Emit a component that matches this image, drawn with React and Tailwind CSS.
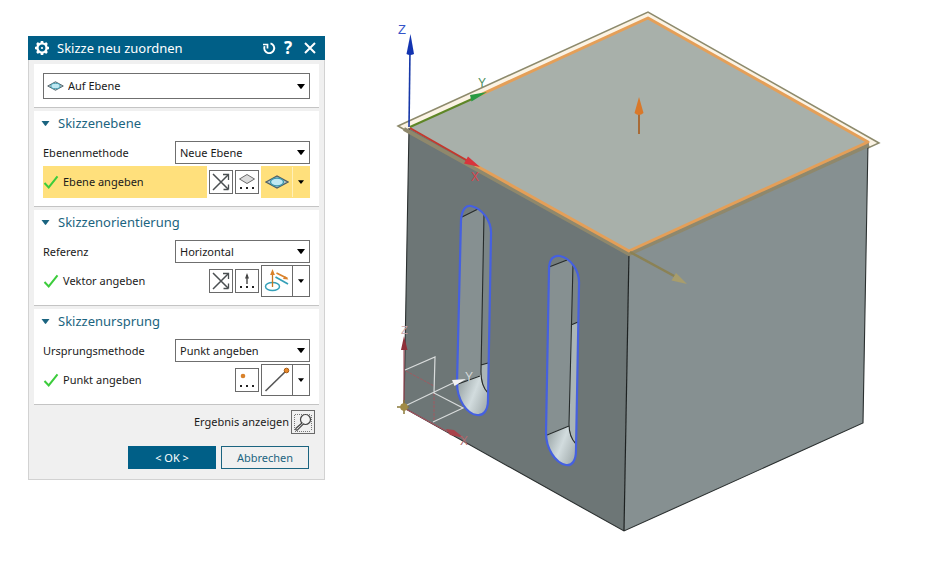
const CaretIcon = ({ className }) => (
  <svg viewBox="0 0 8 5" className={className} aria-hidden="true">
    <path d="M0 0h8L4.6 4.6a.8.8 0 0 1-1.2 0z" fill="currentColor" />
  </svg>
)

const GearIcon = () => (
  <svg viewBox="0 0 16 16" className="h-4 w-4" fill="none" stroke="currentColor" aria-hidden="true">
    <circle cx="8" cy="8" r="4.6" strokeWidth="2.4" />
    <circle cx="8" cy="8" r="1.1" fill="currentColor" stroke="none" />
    <path
      d="M8 1v2M8 13v2M1 8h2M13 8h2M3 3l1.500 1.500M11.500 11.500L13 13M3 13l1.500-1.500M11.500 4.500L13 3"
      strokeWidth="2.6"
    />
  </svg>
)

const ResetIcon = () => (
  <svg viewBox="0 0 14 14" className="h-[14px] w-[14px]" fill="none" stroke="currentColor" aria-hidden="true">
    <path d="M8.500 2.300A5 5 0 1 1 2.600 5.200" strokeWidth="1.9" />
    <path d="M1 3.500h4.500v4" strokeWidth="1.700" />
  </svg>
)

const CloseIcon = () => (
  <svg viewBox="0 0 12 12" className="h-3 w-3" fill="none" stroke="currentColor" aria-hidden="true">
    <path d="M1 1l10 10M11 1L1 11" strokeWidth="2" />
  </svg>
)

const CheckIcon = () => (
  <svg viewBox="0 0 16 14" className="h-[14px] w-4" fill="none" aria-hidden="true">
    <path d="M1.500 8l4.200 4.400L14.500 1.400" stroke="#3ccc3c" strokeWidth="2" />
  </svg>
)

const PlaneIcon = ({ className }) => (
  <svg viewBox="0 0 24 14" className={className} aria-hidden="true">
    <path d="M1 7L12 1l11 6-11 6z" fill="#b4c8cc" stroke="#4f5f66" strokeWidth="1.3" />
    <ellipse cx="12" cy="7" rx="6.5" ry="3.8" fill="#bfe8f2" stroke="#3a98ac" strokeWidth="1.3" />
  </svg>
)

const ReverseIcon = () => (
  <svg viewBox="0 0 22 22" className="h-[22px] w-[22px]" fill="none" stroke="#4a4f52" aria-hidden="true">
    <path d="M3 3l15 15M3 19L18.500 3.500" strokeWidth="1.500" />
    <path d="M13 3.500h5.500V9M18.500 13.500v5M18.500 18.500h-5" strokeWidth="1.300" />
  </svg>
)

const Dots = () => (
  <path d="M4 16h2v2H4zM10 16h2v2h-2zM16 16h2v2h-2z" fill="#222" />
)

const PlaneDialogIcon = () => (
  <svg viewBox="0 0 22 22" className="h-[22px] w-[22px]" aria-hidden="true">
    <path d="M3.500 8L11 3.500 18.500 8 11 12.500z" fill="#dcdcdc" stroke="#6a6a6a" />
    <Dots />
  </svg>
)

const VectorDialogIcon = () => (
  <svg viewBox="0 0 22 22" className="h-[22px] w-[22px]" aria-hidden="true">
    <path d="M11 14V5" stroke="#444" strokeWidth="1.400" />
    <path d="M11 3l2 5.500H9z" fill="#444" />
    <Dots />
  </svg>
)

const PointDialogIcon = () => (
  <svg viewBox="0 0 22 22" className="h-[22px] w-[22px]" aria-hidden="true">
    <circle cx="7" cy="7" r="2.300" fill="#d9822b" />
    <Dots />
  </svg>
)

const InferredVectorIcon = () => (
  <svg viewBox="0 0 30 30" className="h-[30px] w-[30px]" fill="none" aria-hidden="true">
    <ellipse cx="10.500" cy="20.500" rx="7" ry="4" stroke="#35a0b8" strokeWidth="1.500" />
    <path d="M10.500 21V6" stroke="#c87620" strokeWidth="1.300" />
    <path d="M10.500 3l2.400 6H8.100z" fill="#d9822b" />
    <path d="M14.500 7l11 5.500" stroke="#d9822b" strokeWidth="1.700" />
    <path d="M26.500 13.500l-5.500-.5 1.700-3z" fill="#d9822b" />
    <path d="M13.500 11l12.500 7" stroke="#35a0b8" strokeWidth="1.700" />
  </svg>
)

const EndPointIcon = () => (
  <svg viewBox="0 0 30 30" className="h-[30px] w-[30px]" fill="none" aria-hidden="true">
    <path d="M3.500 26L24 6" stroke="#555" strokeWidth="1.600" />
    <circle cx="24.500" cy="5.500" r="2.300" fill="#e8882a" stroke="#a85c14" />
  </svg>
)

const MagnifierIcon = () => (
  <svg viewBox="0 0 22 22" className="h-[22px] w-[22px]" fill="none" aria-hidden="true">
    <path d="M3 3.500h16M3 20.500h16M2.500 4v16M19.500 4v16" stroke="#777" strokeDasharray="1 1" />
    <circle cx="13.500" cy="8.500" r="5" fill="#f4f4f4" stroke="#444" strokeWidth="1.200" />
    <path d="M10 12l-6 5.300a1 1 0 0 0 1.500 1.500l6-6" fill="#f4f4f4" stroke="#444" strokeWidth="1.200" />
  </svg>
)

const SelectBox = ({ id, value, label, icon, className = 'h-[23px]' }) => (
  <div className="relative">
    {icon && <span className="pointer-events-none absolute inset-y-0 left-1 flex items-center">{icon}</span>}
    <select
      id={id}
      aria-label={label}
      className={`block w-full appearance-none border border-[#6f6f6f] bg-white pr-5 leading-4 outline-none ${icon ? 'pl-6' : 'pl-1'} ${className}`}
    >
      <option>{value}</option>
    </select>
    <CaretIcon className="pointer-events-none absolute inset-y-0 right-[5px] my-auto h-[5px] w-2 text-black" />
  </div>
)

const IconButton = ({ label, children }) => (
  <button
    type="button"
    aria-label={label}
    className="flex h-6 w-6 shrink-0 items-center justify-center border border-[#6a6a6a]"
  >
    {children}
  </button>
)

const SplitButton = ({ label, active, children }) => (
  <div className={`flex h-8 w-[49px] shrink-0 border ${active ? 'border-[#ffe07c] bg-[#ffe07c]' : 'border-[#6a6a6a] bg-white'}`}>
    <button type="button" aria-label={label} className="flex w-[30px] items-center justify-center">
      {children}
    </button>
    <button
      type="button"
      aria-label={`${label} Optionen`}
      className={`flex flex-1 items-center justify-center border-l ${active ? 'border-[#fff0b8]' : 'border-[#6a6a6a]'}`}
    >
      <CaretIcon className="h-[4px] w-[6px] text-black" />
    </button>
  </div>
)

const sections = [
  {
    id: 'ebene',
    title: 'Skizzenebene',
    label: 'Ebenenmethode',
    value: 'Neue Ebene',
    step: 'Ebene angeben',
    active: true,
    reverse: true,
    dialogIcon: <PlaneDialogIcon />,
    mainIcon: <PlaneIcon className="h-[14px] w-6" />,
  },
  {
    id: 'orientierung',
    title: 'Skizzenorientierung',
    label: 'Referenz',
    value: 'Horizontal',
    step: 'Vektor angeben',
    reverse: true,
    dialogIcon: <VectorDialogIcon />,
    mainIcon: <InferredVectorIcon />,
  },
  {
    id: 'ursprung',
    title: 'Skizzenursprung',
    label: 'Ursprungsmethode',
    value: 'Punkt angeben',
    step: 'Punkt angeben',
    dialogIcon: <PointDialogIcon />,
    mainIcon: <EndPointIcon />,
  },
]

const Section = ({ section }) => (
  <section className="border-b border-[#c4c4c4] bg-white px-[9px] pb-2">
    <h2 className="flex h-[30px] items-start gap-2 pt-[2px] text-[13px] leading-5 text-[#1b6480]">
      <CaretIcon className="mt-2 -ml-[2px] h-[5px] w-[9px]" />
      {section.title}
    </h2>
    <div className="grid grid-cols-[1fr_135px] items-center">
      <label htmlFor={section.id}>{section.label}</label>
      <SelectBox id={section.id} value={section.value} />
    </div>
    <div className="mt-[2px] flex items-center gap-[2px]">
      <div className={`flex h-8 flex-1 items-center gap-1 ${section.active ? 'bg-[#ffe07c]' : ''}`}>
        <CheckIcon />
        {section.step}
      </div>
      {section.reverse && (
        <IconButton label="Richtung umkehren">
          <ReverseIcon />
        </IconButton>
      )}
      <IconButton label={`${section.step} Dialog`}>{section.dialogIcon}</IconButton>
      <SplitButton label={section.step} active={section.active}>
        {section.mainIcon}
      </SplitButton>
    </div>
  </section>
)

const Dialog = () => (
  <aside className="w-[30%] min-w-[297px] shrink-0 bg-[#f0f0f0] text-[11px] leading-4 text-[#1a1a1a]">
    <header className="flex h-6 items-center bg-[#005f87] pr-[9px] pl-[6px] text-white">
      <GearIcon />
      <h1 className="ml-[7px] flex-1 text-[13px] leading-5">Skizze neu zuordnen</h1>
      <button type="button" aria-label="Zurücksetzen">
        <ResetIcon />
      </button>
      <button type="button" aria-label="Hilfe" className="ml-2 text-[17px] leading-5 font-bold">
        ?
      </button>
      <button type="button" aria-label="Schließen" className="ml-3">
        <CloseIcon />
      </button>
    </header>

    <div className="border-x border-b border-[#d2d2d2] px-[5px] pt-1 pb-[10px]">
      <div className="flex flex-col gap-[3px]">
        <div className="border-b border-[#c4c4c4] bg-white px-[9px] pt-[9px] pb-2">
          <SelectBox
            value="Auf Ebene"
            label="Skizzentyp"
            className="h-[26px]"
            icon={<PlaneIcon className="h-[10px] w-[17px]" />}
          />
        </div>
        {sections.map((section) => (
          <Section key={section.id} section={section} />
        ))}
      </div>

      <div className="mt-[5px] flex items-center justify-end gap-[2px] pr-1">
        <span>Ergebnis anzeigen</span>
        <IconButton label="Ergebnis anzeigen">
          <MagnifierIcon />
        </IconButton>
      </div>
      <div className="mt-3 flex justify-end gap-[5px] pr-[10px]">
        <button type="button" className="h-[23px] w-[88px] bg-[#005f87] text-white">
          &lt; OK &gt;
        </button>
        <button type="button" className="h-[23px] w-[88px] border border-[#1b6480] text-[#1b6480]">
          Abbrechen
        </button>
      </div>
    </div>
  </aside>
)

const slots = [
  {
    id: 'slot-a',
    outline: 'M457 383L461 220C462 209 466 205 471 206C481 208 492 220 491 235L488 400C488 411 483 416 477 415C467 414 457 400 457 383Z',
    cap: 'M455 220L462 217L478 209L484 200H455Z',
    strip: 'M484 200V215L481 375H495V200Z',
    light: 'M481 365L495 361V400H487L481 375Z',
    floor: 'M455 385L481 375C481 386 484 389 490 395V420H455Z',
    edges: 'M462 217L478 209M484 214L481 372C481 384 484 389 488 393M458 384L480 376M481 365L488 363',
  },
  {
    id: 'slot-b',
    outline: 'M546 433L549 270C549 258 554 255 560 256C570 258 580 270 579 285L576 450C576 461 572 466 566 465C555 463 546 448 546 433Z',
    cap: 'M543 270L549 267L567 260L572 250H543Z',
    strip: 'M573 250V265L569 426H584V250Z',
    light: 'M571 325L584 320V452H575L569 426Z',
    floor: 'M543 436L569 426C569 436 572 440 578 446V470H543Z',
    edges: 'M549 267L567 260M573 264L569 424C569 435 572 440 576 444M547 435L569 426M571 325L578 322',
  },
]

const Model = () => (
  <svg viewBox="325 0 604 561" className="min-w-0 flex-1 self-start" fontFamily="Liberation Sans, sans-serif" fill="none">
    <defs>
      <linearGradient id="floor" x1="0" y1="0" x2="1" y2="0.5">
        <stop offset="0.1" stopColor="#929d9e" />
        <stop offset="0.6" stopColor="#d2dcde" />
        <stop offset="1" stopColor="#a5afb0" />
      </linearGradient>
    </defs>

    {/* preview plane and solid body */}
    <path d="M398 126L648 12L879 143L629 257Z" fill="#fbf3e4" stroke="#8d8a6c" strokeWidth="1.500" />
    <path d="M409 128L629 251L624 531L404 408Z" fill="#6d7676" />
    <path d="M629 251L868 142L863 423L624 531Z" fill="#869091" />
    <path d="M409 128L404 408L624 531L863 423L868 142" stroke="#2b3030" strokeWidth="1.100" />
    <path d="M629 251L624 531" stroke="#1d2121" strokeWidth="1.200" />
    <path d="M404 129L629 254L869 145" stroke="#8f886c" strokeWidth="4" />
    <path d="M409 128L648 18L868 142L629 251Z" fill="#a8b0aa" />
    <path d="M480 95L648 18L868 142L629 251L475 165" stroke="#e49f58" strokeWidth="3" strokeLinejoin="round" />

    {/* slots */}
    {slots.map((slot) => (
      <g key={slot.id}>
        <clipPath id={slot.id}>
          <path d={slot.outline} />
        </clipPath>
        <g clipPath={`url(#${slot.id})`}>
          <path d={slot.outline} fill="#869091" />
          <path d={slot.cap} fill="#737c7d" />
          <path d={slot.strip} fill="#7b8586" />
          <path d={slot.light} fill="#aab5b7" />
          <path d={slot.floor} fill="url(#floor)" />
          <path d={slot.edges} stroke="#262b2b" strokeWidth="1.100" />
        </g>
        <path d={slot.outline} stroke="#4560e0" strokeWidth="2.200" />
      </g>
    ))}

    {/* datum axes */}
    <path d="M409 127L410 50" stroke="#1738a8" strokeWidth="1.600" />
    <path d="M410.500 34L414 54Q410 56 406.500 54Z" fill="#1233b0" />
    <path d="M410 127L472 99" stroke="#5e8626" strokeWidth="2" />
    <path d="M487 92L470 95L471.500 101.500Z" fill="#2a9a42" />
    <path d="M410 128L468 161" stroke="#c4382c" strokeWidth="2" />
    <path d="M480 167L464 163.500L468 156.500Z" fill="#d8343c" />
    <text x="398" y="34" fontSize="13" fill="#3454c8">Z</text>
    <text x="478" y="87" fontSize="12" fill="#4a8f5a">Y</text>
    <text x="471" y="181" fontSize="12" fill="#d9434b">X</text>

    {/* plane normal and direction handle */}
    <path d="M639 112V134" stroke="#a85510" strokeWidth="1.500" />
    <path d="M639 97L643.500 113Q639 117 634.500 113Z" fill="#d9782a" />
    <path d="M630 252L676 277" stroke="#8b8255" strokeWidth="2.500" />
    <path d="M687 284L671.500 280.500L676 273Z" fill="#a89d6c" />

    {/* sketch coordinate system */}
    <path d="M404 407V349M404 408L448 432" stroke="#a35560" strokeWidth="1.200" />
    <path d="M406 371L434 386M434 393V422" stroke="#a05a60" strokeDasharray="3 1" />
    <path d="M405 370L435 357L434 393L463 408L433 422M405 406L453 383" stroke="#d9dcdc" strokeWidth="1.200" />
    <path d="M404 336L407.500 350H401Z" fill="#8e2f38" />
    <path d="M466 379L452 380L454.500 386Z" fill="#f2f2f2" />
    <path d="M446 429L454 430L464 438L450 435Z" fill="#a8434b" />
    <text x="401" y="334" fontSize="11" fill="#c9a5aa">Z</text>
    <text x="465" y="381" fontSize="12" fill="#d5d9d9">Y</text>
    <text x="460" y="445" fontSize="12" fill="#b06a70">X</text>
    <path d="M397 407H409M404 400V414" stroke="#8b7a3a" strokeWidth="1.500" />
    <circle cx="404" cy="407" r="3.800" fill="#a08b45" />
  </svg>
)

const App = () => {
  return (
    <main className="flex min-h-screen items-start bg-white pl-7 font-['Noto_Sans','Open_Sans',sans-serif]">
      <div className="flex shrink-0 pt-9">
        <Dialog />
      </div>
      <Model />
    </main>
  )
}

export default App
